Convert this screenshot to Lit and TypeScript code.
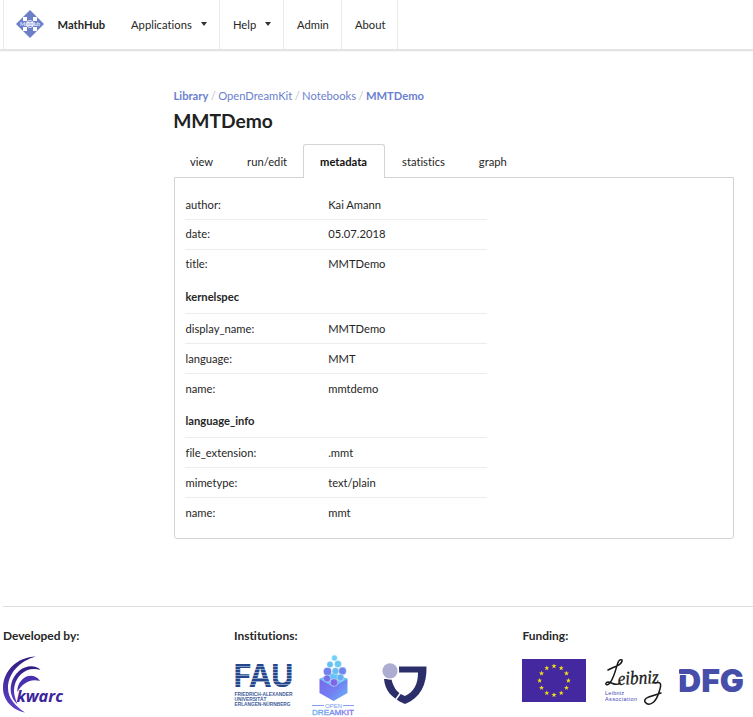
import { LitElement, html, css, svg, nothing } from "lit";
import { customElement, property } from "lit/decorators.js";

type Row = [string, string];
interface Section {
  title?: string;
  rows: Row[];
}

const SECTIONS: Section[] = [
  { rows: [["author:", "Kai Amann"], ["date:", "05.07.2018"], ["title:", "MMTDemo"]] },
  { title: "kernelspec", rows: [["display_name:", "MMTDemo"], ["language:", "MMT"], ["name:", "mmtdemo"]] },
  { title: "language_info", rows: [["file_extension:", ".mmt"], ["mimetype:", "text/plain"], ["name:", "mmt"]] },
];

@customElement("hub-nav")
export class HubNav extends LitElement {
  static styles = css`
    :host { display: block; }
    .bar { display: flex; height: 49px; margin-left: 3px; border-left: 1px solid #e9e9ea; }
    .shade { height: 2px; background: #e4e4e5; border-bottom: 1px solid #f6f6f6; }
    .item { display: flex; align-items: center; box-sizing: border-box; padding: 0 12px 0 13px; border-right: 1px solid #e9e9ea; }
    .brand { border-right: 0; padding: 0 13px 0 12px; font-weight: 700; width: 114px; }
    .logo { width: 28px; height: 28px; margin: -2px 13.500px 0 0; flex: none; }
    .apps { width: 102px; letter-spacing: 0.040px; }
    .help { width: 64px; }
    .admin { width: 58px; }
    .about { width: 56px; }
    .caret { width: 0; height: 0; margin: -2px 0 0 auto; border: 3px solid transparent; border-top: 4px solid #333; border-bottom: 0; }
  `;
  render() {
    return html`
      <nav class="bar">
        <div class="item brand">
          <svg class="logo" viewBox="0 0 28 28">
            <path d="M14 0 28 14 14 28 0 14Z" fill="#6b7fca" />
            <path d="M7 7h4v4H7zM17 7h4v4h-4zM7 17h4v4H7zM17 17h4v4h-4z" fill="#fff" />
            <circle cx="14" cy="14" r="3.800" fill="#fff" />
            <path d="M11 11h6l-3 1.500zM11 17h6l-3-1.500z" fill="#8798d6" />
            <text x="4" y="16" font-family="Lato, sans-serif" font-weight="700" font-size="5.500" textLength="20" fill="#dfe5f8">MathHub</text>
            <path d="M11 14h6" stroke="#8fa0dc" stroke-width=".8" />
          </svg>
          <span>MathHub</span>
        </div>
        <div class="item apps">Applications<i class="caret"></i></div>
        <div class="item help">Help<i class="caret"></i></div>
        <div class="item admin">Admin</div>
        <div class="item about">About</div>
      </nav>
      <div class="shade"></div>
    `;
  }
}

@customElement("meta-table")
export class MetaTable extends LitElement {
  @property({ attribute: false }) sections: Section[] = [];
  static styles = css`
    :host { display: block; width: 302px; }
    .row { display: grid; grid-template-columns: 142.700px 1fr; align-items: center; box-sizing: border-box; height: 30px; padding-left: 0.500px; border-top: 1px solid #ececec; }
    .row.top { border-top-color: transparent; }
    .row.lead + .row.lead { padding-bottom: 2px; }
    .head { height: 34px; box-sizing: border-box; padding: 10px 0 0 0.500px; font-weight: 700; line-height: 16px; }
  `;
  render() {
    return this.sections.map(
      (s) => html`
        ${s.title ? html`<div class="head">${s.title}</div>` : nothing}
        ${s.rows.map(
          ([k, v], i) =>
            html`<div class="row ${s.title ? "" : "lead"} ${i === 0 && !s.title ? "top" : ""}"><span>${k}</span><span>${v}</span></div>`
        )}
      `
    );
  }
}

const star = (i: number) => {
  const a = (i * Math.PI) / 6;
  const x = 32 + 14.400 * Math.sin(a);
  const y = 21.500 - 14.400 * Math.cos(a);
  return svg`<path transform="translate(${x} ${y}) scale(1.150)" d="M0-2.200.6-.7 2.200-.7.9.3 1.400 2 0 1-1.400 2-.9.3-2.200-.7-.6-.7Z" fill="#f2df12"/>`;
};

@customElement("hub-footer")
export class HubFooter extends LitElement {
  static styles = css`
    :host { display: block; }
    .foot { display: grid; grid-template-columns: 231px 288.500px 1fr; margin-left: 3px; border-top: 1px solid #dcdcdd; padding-top: 21px; }
    .title { font-size: 11.950px; font-weight: 700; line-height: 16px; height: 27px; }
    .logos { display: flex; align-items: flex-start; }
    svg { display: block; flex: none; overflow: visible; }
    .kwarc { margin-top: 1px; }
    .fau { margin: 7px 18px 0 0; }
    .odk { margin-right: 27px; }
    .shield { margin-top: 8px; }
    .eu { margin: 4px 19px 0 -0.500px; }
    .leibniz { margin: 4px 17px 0 0; }
    .dfg { margin-top: 14px; }
  `;
  render() {
    return html`
      <footer class="foot">
        <section>
          <div class="title">Developed by:</div>
          <div class="logos">
            <svg class="kwarc" width="60" height="57" viewBox="0 0 60 57">
              <defs>
                <linearGradient id="kw" x1="0" y1="0" x2="0" y2="1">
                  <stop offset="0" stop-color="#301b80" /><stop offset="1" stop-color="#6043ca" />
                </linearGradient>
              </defs>
              <path d="M33 .5C14 1 0 15 0 32 0 44 9 54 22 56.500 12 50 5 42 5 32 5 18 16 5 33 .5Z" fill="url(#kw)" />
              <path d="M37.500 14C33 9 23 9 16 15 8 22 6.500 32 8.500 39 10 44 13 47 14.500 48 11 40 10.500 35 11.500 30 14 19 24 10 37.500 14Z" fill="url(#kw)" />
              <path d="M37 25C33 19 26 18.500 21 22 16 26 14 31 14.500 36 18 29 26 22 37 25Z" fill="#4a30ae" />
              <text x="13.500" y="46" font-family="'Open Sans', sans-serif" font-style="italic" font-weight="700" font-size="16.500" textLength="46.500" lengthAdjust="spacingAndGlyphs" fill="#3c249c">kwarc</text>
            </svg>
          </div>
        </section>
        <section>
          <div class="title">Institutions:</div>
          <div class="logos">
            <svg class="fau" width="60" height="47" viewBox="0 0 60 47">
              <text x="-0.500" y="24.500" font-family="Inter, sans-serif" font-weight="700" font-size="31.500" textLength="60" lengthAdjust="spacingAndGlyphs" fill="#24478c">FAU</text>
              <path d="M0 4.500H60M0 7.500H60M0 10.500H60M0 13.500H60M0 16.500H60M0 19.500H60M0 22.500H60" stroke="#fff" stroke-width=".9" opacity=".5" />
              <g font-family="'Liberation Sans', sans-serif" font-weight="700" font-size="5" fill="#3f5c99">
                <text x="0.500" y="34" textLength="58" lengthAdjust="spacingAndGlyphs">FRIEDRICH-ALEXANDER</text>
                <text x="0.500" y="38.800" textLength="32" lengthAdjust="spacingAndGlyphs">UNIVERSITÄT</text>
                <text x="0.500" y="43.600" textLength="56" lengthAdjust="spacingAndGlyphs">ERLANGEN-NÜRNBERG</text>
              </g>
            </svg>
            <svg class="odk" width="43" height="62" viewBox="0 0 43 62">
              <defs>
                <linearGradient id="od" x1="0" y1="0" x2="1" y2="1">
                  <stop offset="0" stop-color="#7564ea" /><stop offset=".55" stop-color="#747df1" /><stop offset="1" stop-color="#68b8f7" />
                </linearGradient>
                <linearGradient id="ot" x1="0" y1="0" x2="1" y2="0">
                  <stop offset="0" stop-color="#65b7f2" /><stop offset="1" stop-color="#826cec" />
                </linearGradient>
              </defs>
              <path d="M7.500 24 21.500 18 35.500 24V38L21.500 46 7.500 38Z" fill="url(#od)" />
              <path d="M7.500 24 21.500 18 35.500 24 21.500 32Z" fill="#62c5f7" />
              <g stroke="#fff" stroke-width=".4">
                <circle cx="22.500" cy="3" r="2.900" fill="#72d0f5" />
                <circle cx="18" cy="9.500" r="3.200" fill="#66bff3" />
                <circle cx="26" cy="9" r="3.600" fill="#68c9f3" />
                <circle cx="15.500" cy="16.500" r="4.100" fill="#7180ec" />
                <circle cx="23.500" cy="16" r="3.500" fill="#68bef2" />
                <circle cx="30.500" cy="16" r="3.900" fill="#7186ed" />
                <circle cx="15" cy="23.500" r="3.600" fill="#7771ed" />
                <circle cx="22" cy="27.500" r="3.800" fill="#8065e9" />
                <circle cx="28.500" cy="22.500" r="3.500" fill="#69aef1" />
              </g>
              <path d="M0 50.500H12M31 50.500H42" stroke="#859cf0" stroke-width="1" />
              <text x="13" y="52.500" font-family="'Liberation Sans', sans-serif" font-size="5" textLength="17" lengthAdjust="spacingAndGlyphs" fill="#739cee">OPEN</text>
              <text x="0" y="59.500" font-family="'Liberation Sans', sans-serif" font-size="7.800" textLength="42" lengthAdjust="spacingAndGlyphs" fill="url(#ot)" stroke="url(#ot)" stroke-width=".3">DREAMKIT</text>
            </svg>
            <svg class="shield" width="45" height="42" viewBox="0 0 45 42">
              <path d="M17 3.500H44.500C45 22 38 35 23 41 9 35 3 27 2 16H9.500C11 24 15 30 23 33 32 29 36 21 36 9.500H17Z" fill="#2c2e69" />
              <path d="M13.500 37 19.500 28.500" stroke="#fff" stroke-width="1.500" fill="none" />
              <circle cx="8.500" cy="8" r="8.700" fill="#fff" />
              <circle cx="8" cy="7.800" r="7.600" fill="#adadd1" />
            </svg>
          </div>
        </section>
        <section>
          <div class="title">Funding:</div>
          <div class="logos">
            <svg class="eu" width="64" height="43" viewBox="0 0 64 43">
              <rect width="64" height="43" fill="#4428a0" />
              ${Array.from({ length: 12 }, (_, i) => star(i))}
            </svg>
            <svg class="leibniz" width="57" height="47" viewBox="0 0 57 47">
              <g fill="none" stroke="#171717" stroke-width="1.500" stroke-linecap="round" stroke-linejoin="round">
                <path d="M3 11C8 8 18 6 17 1 11-1 13 12 5 24 1 28-1 24 3 23 7 23 10 28 15 24" />
                <path d="M50 24C56 22 57 25 54 33 51 44 44 48 40 43 38 39 46 37 56 34" />
              </g>
              <text x="13" y="26" font-family="'Liberation Serif', serif" font-style="italic" font-size="19" textLength="41" lengthAdjust="spacingAndGlyphs" fill="#171717" stroke="#171717" stroke-width=".3" transform="rotate(-3 13 26)">eibniz</text>
              <g font-family="'Liberation Sans', sans-serif" font-size="5.500" fill="#4046b4">
                <text x="0" y="36" textLength="19">Leibniz</text>
                <text x="0" y="42" textLength="32">Association</text>
              </g>
            </svg>
            <svg class="dfg" width="64" height="24" viewBox="0 0 64 24">
              <text x="-1" y="23" font-family="Inter, sans-serif" font-weight="900" font-size="31" textLength="66" lengthAdjust="spacingAndGlyphs" fill="#464eaa">DFG</text>
              <path d="M0 5.500H11M0 5V24" stroke="#fff" stroke-width="1.200" />
              <path d="M0 .5H5V4.500H0Z" fill="#464eaa" />
            </svg>
          </div>
        </section>
      </footer>
    `;
  }
}

@customElement("app-root")
export class AppRoot extends LitElement {
  static styles = css`
    :host { display: block; height: 717px; overflow: hidden; background: #fff; color: #262626; font: 11.200px/16px Lato, "Liberation Sans", sans-serif; font-variant-ligatures: none; }
    .page { margin: 36px 19px 0 174px; height: 518px; }
    .crumbs { color: #6b7fcf; line-height: 16px; height: 16px; margin-left: -0.500px; white-space: pre; }
    .sep { color: #c3c3c5; margin: 0 2.400px; }
    .title { margin: 5px 0 11px -0.800px; font-size: 19.200px; line-height: 24px; height: 24px; font-weight: 700; color: #222; }
    .tabs { display: flex; height: 34px; margin-left: -1px; position: relative; }
    .tab { box-sizing: border-box; padding: 9px 16px 0; border: 1px solid transparent; }
    .tab.active { background: #fff; border-color: #d4d4d5; border-bottom: 0; border-radius: 3px 3px 0 0; font-weight: 700; color: #111; width: 82px; margin-left: -1px; }
    .panel { box-sizing: border-box; height: 362px; margin-top: -1px; border: 1px solid #d4d4d5; border-radius: 0 0 3px 3px; padding: 11px 10px; }
  `;
  render() {
    return html`
      <hub-nav></hub-nav>
      <main class="page">
        <div class="crumbs"><b>Library</b><span class="sep">/</span>OpenDreamKit<span class="sep">/</span>Notebooks<span class="sep">/</span><b>MMTDemo</b></div>
        <h1 class="title">MMTDemo</h1>
        <div class="tabs">
          ${["view", "run/edit", "metadata", "statistics", "graph"].map(
            (t) => html`<div class="tab ${t === "metadata" ? "active" : ""}">${t}</div>`
          )}
        </div>
        <div class="panel"><meta-table .sections=${SECTIONS}></meta-table></div>
      </main>
      <hub-footer></hub-footer>
    `;
  }
}
